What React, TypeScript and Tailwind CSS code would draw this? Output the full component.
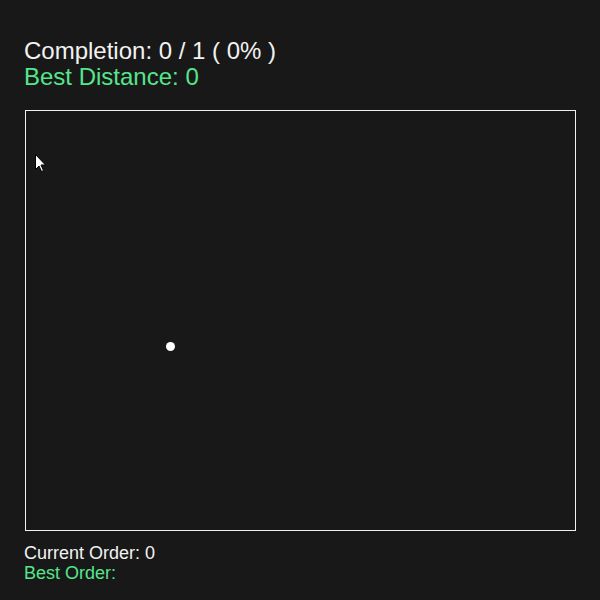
export default function App() {
  return (
    <div className="w-[600px] h-[600px] bg-[#181818] overflow-hidden font-['Liberation_Sans',Arial,sans-serif]">
      <div className="pt-[38px] pl-[24px]">
        <div className="text-[24px] leading-[26px] text-[#f2f2f2]">Completion: 0 / 1 ( 0% )</div>
        <div className="text-[24px] leading-[26px] text-[#55e68c]">Best Distance: 0</div>

        <div className="relative mt-[20px] ml-px w-[551px] h-[421px] border border-[#f0f0f0]">
          <div className="absolute left-[140px] top-[231px] w-[9px] h-[9px] rounded-full bg-white" />
          <svg className="absolute left-[9px] top-[43px]" width="12" height="19" viewBox="0 0 12 19">
            <path d="M0.5 0.5 L0.5 15.5 L4 12 L6.5 17.5 L8.5 16.5 L6 11 L10.5 11 Z" fill="#fff" stroke="#000" strokeWidth="1" />
          </svg>
        </div>

        <div className="mt-[12px] text-[18px] leading-[20px] text-[#f2f2f2]">Current Order: 0</div>
        <div className="text-[18px] leading-[20px] text-[#55e68c]">Best Order:</div>
      </div>
    </div>
  );
}
